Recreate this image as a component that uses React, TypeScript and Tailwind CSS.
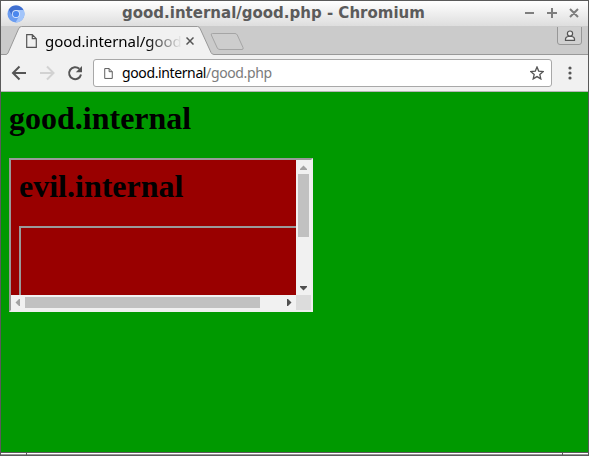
import React from "react";

function PageIcon({ className }: { className: string }) {
  return (
    <svg viewBox="0 0 11 14" className={className} fill="none" stroke="#555" strokeWidth="1.2">
      <path d="M.7.7h5.6l4 4v8.6H.7zM6.3.7v4h4" />
    </svg>
  );
}

function ChromiumLogo() {
  return (
    <svg viewBox="0 0 18 18" className="h-[18px] w-[18px]">
      <circle cx="9" cy="9" r="8.5" fill="#6a9cf0" />
      <path d="M1.6 4.8A8.5 8.5 0 0 1 16.5 5H9L5.5 10.5z" fill="#3f6fd0" />
      <path d="M16.5 5A8.5 8.5 0 0 1 8.5 17.5L12.6 10.5 9 5z" fill="#a3c5fa" />
      <circle cx="9" cy="9" r="4" fill="#d3e3fc" />
      <circle cx="9" cy="9" r="3.1" fill="#4a87ee" />
    </svg>
  );
}

function TitleBar() {
  return (
    <header className="flex h-[25px] shrink-0 items-center bg-gradient-to-b from-white to-[#dedede] pl-[6px] pr-[8px]">
      <ChromiumLogo />
      <h1 className="ml-[97px] w-[304px] whitespace-nowrap pb-0.5 font-['DejaVu_Sans',sans-serif] text-[15px] font-bold leading-6 text-[#5b5b5b]">
        good.internal/good.php - Chromium
      </h1>
      <svg viewBox="0 0 56 12" className="mb-[3px] ml-auto h-3 w-14" stroke="#7e7e7e" strokeWidth="2" fill="none">
        <path d="M1 7h9M23 7h10M28 2v10M46 3l8 8M54 3l-8 8" />
      </svg>
    </header>
  );
}

function TabStrip() {
  return (
    <div className="relative flex h-[29px] shrink-0 bg-[#cbcbcb]">
      <svg viewBox="0 0 587 29" className="absolute inset-0 h-[29px] w-[587px]">
        <path d="M0 28.5H5Q6.3 28.3 7 27L17.5 3Q18.5 .5 20.5 .5H196.5Q198.3 .5 199.3 3L210 26.5Q211 28.5 213 28.5H587V29H0z" fill="#f1f1f1" />
        <path d="M0 28.5H5Q6.3 28.3 7 27L17.5 3Q18.5 .5 20.5 .5H196.5Q198.3 .5 199.3 3L210 26.5Q211 28.5 213 28.5H587" fill="none" stroke="#999" />
        <path d="M211.5 7.5H234Q235.5 7.5 236.3 9L242 21.5Q242.7 23.5 241 23.5H219Q217 23.5 216.3 22L210.3 9Q209.7 7.5 211.5 7.5z" fill="#cdcdcd" stroke="#a5a5a5" />
        <path d="M556.5 1V16Q556.5 18.5 559 18.5H578Q580.5 18.5 580.5 16V1" fill="#d0d0d0" stroke="#979797" />
        <g stroke="#555" strokeWidth="1.2" fill="#eee">
          <circle cx="569" cy="7.6" r="2.6" />
          <path d="M564.5 14.4V12.8Q565 10.5 567.5 10.5H570.5Q573 10.5 573.5 12.8V14.4z" />
        </g>
      </svg>
      <div className="relative flex h-7 w-[212px] items-center pl-[25px] pt-px">
        <PageIcon className="h-[14px] w-[11px] shrink-0" />
        <span className="ml-[8px] w-[137px] overflow-hidden whitespace-nowrap bg-gradient-to-r from-black from-[74%] to-transparent bg-clip-text font-['Noto_Sans',sans-serif] text-[15px] leading-6 tracking-[-0.05px] text-transparent">
          good.internal/good
        </span>
        <svg viewBox="0 0 8 8" className="ml-[4px] h-2 w-2" stroke="#555" strokeWidth="1.5">
          <path d="M.5.5l7 7M7.5.5l-7 7" />
        </svg>
      </div>
    </div>
  );
}

function Toolbar() {
  return (
    <nav className="flex h-[37px] shrink-0 items-center border-b border-[#b5b5b5] bg-[#f1f1f1] pl-[10px]">
      <svg viewBox="0 0 74 18" className="h-[18px] w-[74px]" fill="none" strokeWidth="2">
        <path d="M15 9H2.5M8.5 2.5L2 9l6.5 6.5" stroke="#555" />
        <path d="M29 9h12.5M36 2.5L42.5 9 36 15.5" stroke="#d2d2d2" />
        <path d="M68.3 4.8A6 6 0 1 0 70 10.5" stroke="#555" />
        <path d="M71 2v6.2h-6.2z" fill="#555" />
      </svg>
      <div className="ml-2 flex h-7 w-[459px] items-center rounded-[3px] border border-[#a8a8a8] bg-white pl-[10px] pr-[7px]">
        <PageIcon className="h-[11px] w-[9px]" />
        <span className="ml-[9px] whitespace-nowrap font-['Noto_Sans',sans-serif] text-[14px] leading-6 tracking-[-0.38px] text-[#7b7b7b]">
          <span className="text-black">good.internal</span>/good.php
        </span>
        <svg viewBox="0 0 14 14" className="ml-auto h-[14px] w-[14px]" fill="none" stroke="#555" strokeWidth="1.3">
          <path d="M7 1l1.7 4.1 4.5.4-3.4 3 1 4.4L7 10.6l-3.8 2.3 1-4.4-3.4-3 4.5-.4z" />
        </svg>
      </div>
      <svg viewBox="0 0 4 14" className="ml-[16px] h-[14px] w-1" fill="#555">
        <circle cx="2" cy="2" r="1.6" />
        <circle cx="2" cy="7" r="1.6" />
        <circle cx="2" cy="12" r="1.6" />
      </svg>
    </nav>
  );
}

function EmbeddedFrame() {
  return (
    <section className="mt-[22px] grid h-[154px] w-[304px] grid-cols-[285px_15px] grid-rows-[135px_15px] border-2 border-b-[#eee] border-l-[#9a9a9a] border-r-[#eee] border-t-[#9a9a9a] bg-[#f1f1f1]">
      <div className="overflow-hidden bg-[#990000] pl-2 pt-2">
        <h2 className="h-9 text-[32px] font-bold leading-9">evil.internal</h2>
        <div className="mt-[22px] h-[154px] w-[304px] border-2 border-[#9a9a9a]" />
      </div>
      <div className="flex flex-col items-center">
        <svg viewBox="0 0 15 14" className="h-[14px] w-[15px] shrink-0" fill="#a3a3a3">
          <path d="M4 10h7V9L7.5 5.5 4 9z" />
        </svg>
        <div className="h-[63px] w-[11px] bg-[#c1c1c1]" />
        <svg viewBox="0 0 15 14" className="mt-auto h-[14px] w-[15px] shrink-0" fill="#505050">
          <path d="M4 5h7v1L7.5 9.5 4 6z" />
        </svg>
      </div>
      <div className="flex items-center">
        <svg viewBox="0 0 14 15" className="h-[15px] w-[14px] shrink-0" fill="#a3a3a3">
          <path d="M9 4v7H8L4.5 7.5 8 4z" />
        </svg>
        <div className="h-[11px] w-[235px] bg-[#c1c1c1]" />
        <svg viewBox="0 0 14 15" className="ml-auto h-[15px] w-[14px] shrink-0" fill="#505050">
          <path d="M5 4v7h1l3.5-3.5L6 4z" />
        </svg>
      </div>
      <div className="bg-[#dcdcdc]" />
    </section>
  );
}

function ResizeEdge() {
  return (
    <footer className="flex h-[3px] shrink-0 gap-px border-t border-[#5a5a5a] bg-[#5a5a5a]">
      <div className="w-[25px] border-b border-[#999] bg-white" />
      <div className="flex-1 border-b border-[#999] bg-white" />
      <div className="w-[25px] border-b border-[#999] bg-white" />
    </footer>
  );
}

export default function App() {
  return (
    <div className="flex h-[456px] w-[589px] flex-col overflow-hidden border border-[#5a5a5a]">
      <TitleBar />
      <TabStrip />
      <Toolbar />
      <main className="flex-1 bg-[#009900] pl-2 pt-2 font-['Liberation_Serif',serif] text-black">
        <h1 className="h-9 text-[32px] font-bold leading-9">good.internal</h1>
        <EmbeddedFrame />
      </main>
      <ResizeEdge />
    </div>
  );
}
